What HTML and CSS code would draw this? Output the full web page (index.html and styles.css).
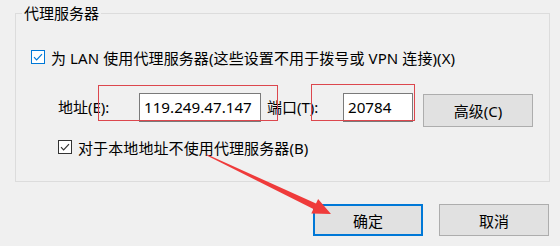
FILE: index.html
```html
<!DOCTYPE html>
<html lang="zh-CN">
<head>
<meta charset="utf-8">
<title>代理服务器</title>
<link rel="stylesheet" href="styles.css">
</head>
<body>
<div class="dialog">
  <fieldset class="group">
    <legend class="group-title">代理服务器</legend>
    <div class="check-row row-lan">
      <span class="box box-focus"><svg viewBox="0 0 12 12" width="12" height="12"><path d="M2 6.2 L4.6 8.8 L10 3.2" fill="none" stroke="currentColor" stroke-width="1.2"/></svg></span>
      <span class="check-text">为 LAN 使用代理服务器(这些设置不用于拨号或 VPN 连接)(X)</span>
    </div>
    <div class="addr-row">
      <span class="field-label label-addr">地址(E):</span>
      <span class="textbox tb-addr">119.249.47.147</span>
      <span class="field-label label-port">端口(T):</span>
      <span class="textbox tb-port">20784</span>
      <span class="btn btn-adv">高级(C)</span>
    </div>
    <div class="check-row row-local">
      <span class="box"><svg viewBox="0 0 12 12" width="12" height="12"><path d="M2 6.2 L4.6 8.8 L10 3.2" fill="none" stroke="currentColor" stroke-width="1.2"/></svg></span>
      <span class="check-text">对于本地地址不使用代理服务器(B)</span>
    </div>
  </fieldset>
  <div class="footer">
    <span class="btn btn-ok">确定</span>
    <span class="btn">取消</span>
  </div>
  <div class="mark mark-addr"></div>
  <div class="mark mark-port"></div>
  <svg class="arrow" viewBox="0 0 560 246" width="560" height="246">
    <polygon points="207.2,154.4 316.0,203.6 318.1,199.1 331,214 311.3,213.5 313.4,209.0 206.8,155.6" fill="#ef3b3b"/>
  </svg>
</div>
</body>
</html>
```

FILE: styles.css
```css
html, body {
  margin: 0;
  padding: 0;
}

body {
  background: #f0f0f0;
  font-family: "Noto Sans", "Noto Sans CJK SC", sans-serif;
  font-size: 15px;
  color: #000;
}

.dialog {
  position: relative;
  width: 560px;
  height: 246px;
  box-sizing: border-box;
  padding: 2px 0 0 15px;
  overflow: hidden;
}

.group {
  margin: 0;
  padding: 0 0 23px 0;
  width: 535px;
  box-sizing: border-box;
  min-inline-size: 0;
  border: 1px solid #dcdcdc;
}

.group-title {
  margin-left: 6px;
  padding: 0 2px;
  line-height: 23px;
  font-size: 15px;
}

.check-row {
  display: flex;
  align-items: center;
  height: 22px;
  gap: 6px;
  white-space: nowrap;
}

.check-text {
  letter-spacing: 0.1px;
}

.row-lan {
  margin-top: 21px;
  margin-left: 15px;
}

.row-local {
  margin-top: 9px;
  margin-left: 42px;
}

.box {
  width: 14px;
  height: 14px;
  box-sizing: border-box;
  border: 1px solid #333;
  background: #fff;
  color: #333;
  display: flex;
  align-items: center;
  justify-content: center;
  flex: none;
}

.box-focus {
  border-color: #0078d7;
  color: #0078d7;
}

.box svg {
  display: block;
}

.addr-row {
  display: flex;
  align-items: flex-start;
  margin-top: 25px;
  margin-left: 42px;
  height: 34px;
  white-space: nowrap;
}

.field-label {
  line-height: 29px;
  flex: none;
}

.label-addr {
  width: 81px;
}

.label-port {
  width: 76px;
  margin-left: 6px;
}

.textbox {
  height: 29px;
  box-sizing: border-box;
  border: 1px solid #7a7a7a;
  background: #fff;
  padding-left: 4px;
  line-height: 27px;
  font-size: 15.2px;
  flex: none;
}

.tb-addr {
  width: 122px;
}

.tb-port {
  width: 70px;
}

.btn {
  width: 110px;
  height: 32px;
  box-sizing: border-box;
  border: 1px solid #adadad;
  background: #e1e1e1;
  display: flex;
  align-items: center;
  justify-content: center;
  flex: none;
}

.btn-adv {
  margin-left: 10px;
  margin-top: 1px;
  height: 33px;
}

.btn-ok {
  border: 2px solid #0078d7;
}

.footer {
  display: flex;
  justify-content: flex-end;
  gap: 16px;
  margin-top: 22px;
  padding-right: 11px;
}

.mark {
  position: absolute;
  box-sizing: border-box;
  border: 1px solid #dc474d;
}

.mark-addr {
  left: 98px;
  top: 85px;
  width: 180px;
  height: 36px;
}

.mark-port {
  left: 311px;
  top: 84px;
  width: 104px;
  height: 37px;
}

.arrow {
  position: absolute;
  left: 0;
  top: 0;
  pointer-events: none;
}
```
